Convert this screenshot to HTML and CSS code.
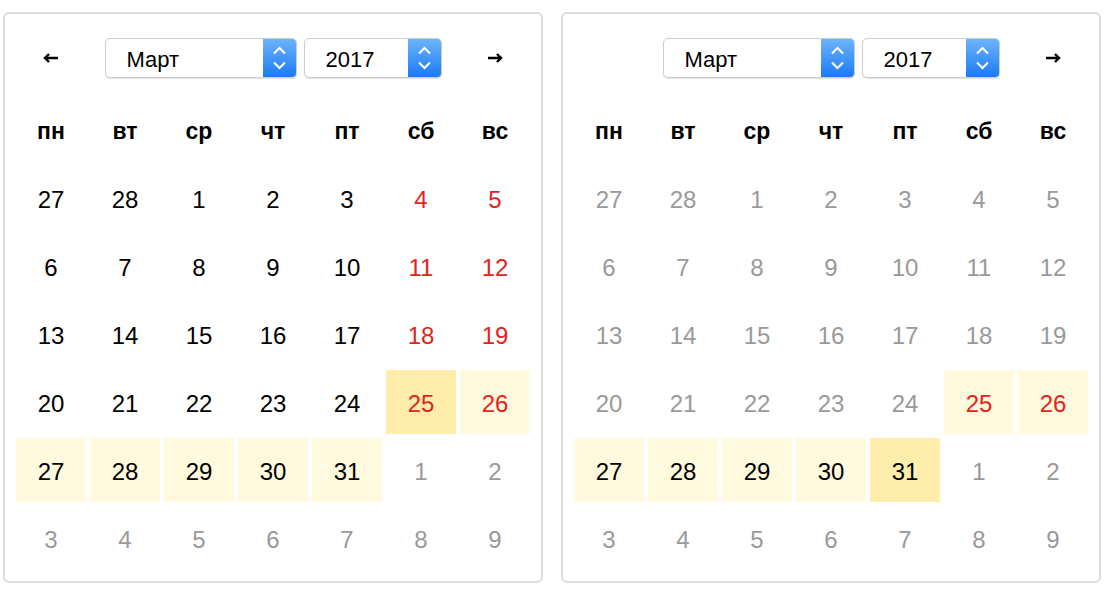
FILE: index.html
```html
<!DOCTYPE html>
<html>
<head>
  <meta charset="utf-8">
  <title>Календарь</title>
  <link rel="stylesheet" href="styles.css">
</head>
<body>

<div class="pickers">

  <!-- first month, start date chosen -->
  <div class="panel">
    <div class="nav">
      <span class="arrow">
        <svg width="16" height="10" viewBox="0 0 16 10"><path d="M15 5H3M6 1L2 5L6 9" fill="none" stroke="#000" stroke-width="2.4"/></svg>
      </span>
      <div class="selects">
        <div class="select month">
          <span class="label">Март</span>
          <span class="stepper"><svg width="33" height="38" viewBox="0 0 33 38"><path d="M11 14.5L16.5 9L22 14.5M11 23.5L16.5 29L22 23.5" fill="none" stroke="#fff" stroke-width="2"/></svg></span>
        </div>
        <div class="select year">
          <span class="label">2017</span>
          <span class="stepper"><svg width="33" height="38" viewBox="0 0 33 38"><path d="M11 14.5L16.5 9L22 14.5M11 23.5L16.5 29L22 23.5" fill="none" stroke="#fff" stroke-width="2"/></svg></span>
        </div>
      </div>
      <span class="arrow">
        <svg width="16" height="10" viewBox="0 0 16 10"><path d="M1 5H13M10 1L14 5L10 9" fill="none" stroke="#000" stroke-width="2.4"/></svg>
      </span>
    </div>

    <div class="grid">
      <div class="wd">пн</div><div class="wd">вт</div><div class="wd">ср</div><div class="wd">чт</div><div class="wd">пт</div><div class="wd">сб</div><div class="wd">вс</div>

      <div class="day">27</div><div class="day">28</div><div class="day">1</div><div class="day">2</div><div class="day">3</div><div class="day red">4</div><div class="day red">5</div>
      <div class="day">6</div><div class="day">7</div><div class="day">8</div><div class="day">9</div><div class="day">10</div><div class="day red">11</div><div class="day red">12</div>
      <div class="day">13</div><div class="day">14</div><div class="day">15</div><div class="day">16</div><div class="day">17</div><div class="day red">18</div><div class="day red">19</div>
      <div class="day">20</div><div class="day">21</div><div class="day">22</div><div class="day">23</div><div class="day">24</div><div class="day red picked">25</div><div class="day red range">26</div>
      <div class="day range">27</div><div class="day range">28</div><div class="day range">29</div><div class="day range">30</div><div class="day range">31</div><div class="day muted">1</div><div class="day muted">2</div>
      <div class="day muted">3</div><div class="day muted">4</div><div class="day muted">5</div><div class="day muted">6</div><div class="day muted">7</div><div class="day muted">8</div><div class="day muted">9</div>
    </div>
  </div>

  <!-- second month, end date chosen -->
  <div class="panel">
    <div class="nav">
      <span class="arrow hidden"></span>
      <div class="selects">
        <div class="select month">
          <span class="label">Март</span>
          <span class="stepper"><svg width="33" height="38" viewBox="0 0 33 38"><path d="M11 14.5L16.5 9L22 14.5M11 23.5L16.5 29L22 23.5" fill="none" stroke="#fff" stroke-width="2"/></svg></span>
        </div>
        <div class="select year">
          <span class="label">2017</span>
          <span class="stepper"><svg width="33" height="38" viewBox="0 0 33 38"><path d="M11 14.5L16.5 9L22 14.5M11 23.5L16.5 29L22 23.5" fill="none" stroke="#fff" stroke-width="2"/></svg></span>
        </div>
      </div>
      <span class="arrow">
        <svg width="16" height="10" viewBox="0 0 16 10"><path d="M1 5H13M10 1L14 5L10 9" fill="none" stroke="#000" stroke-width="2.4"/></svg>
      </span>
    </div>

    <div class="grid">
      <div class="wd">пн</div><div class="wd">вт</div><div class="wd">ср</div><div class="wd">чт</div><div class="wd">пт</div><div class="wd">сб</div><div class="wd">вс</div>

      <div class="day muted">27</div><div class="day muted">28</div><div class="day muted">1</div><div class="day muted">2</div><div class="day muted">3</div><div class="day muted">4</div><div class="day muted">5</div>
      <div class="day muted">6</div><div class="day muted">7</div><div class="day muted">8</div><div class="day muted">9</div><div class="day muted">10</div><div class="day muted">11</div><div class="day muted">12</div>
      <div class="day muted">13</div><div class="day muted">14</div><div class="day muted">15</div><div class="day muted">16</div><div class="day muted">17</div><div class="day muted">18</div><div class="day muted">19</div>
      <div class="day muted">20</div><div class="day muted">21</div><div class="day muted">22</div><div class="day muted">23</div><div class="day muted">24</div><div class="day red range">25</div><div class="day red range">26</div>
      <div class="day range">27</div><div class="day range">28</div><div class="day range">29</div><div class="day range">30</div><div class="day picked">31</div><div class="day muted">1</div><div class="day muted">2</div>
      <div class="day muted">3</div><div class="day muted">4</div><div class="day muted">5</div><div class="day muted">6</div><div class="day muted">7</div><div class="day muted">8</div><div class="day muted">9</div>
    </div>
  </div>

</div>

</body>
</html>
```

FILE: styles.css
```css
body {
  margin: 0;
  padding: 12px 0 0 3px;
  background: #fff;
  font-family: "Liberation Sans", Arial, sans-serif;
  color: #000;
}

.pickers {
  display: flex;
  gap: 18px;
}

.panel {
  width: 514px;
  padding: 24px 11px 11px 11px;
  border: 2px solid #dcdcdc;
  border-radius: 6px;
}

/* top bar with arrows and selects */
.nav {
  display: flex;
  align-items: center;
  height: 40px;
  margin-bottom: 20px;
}

.arrow {
  width: 70px;
  display: flex;
  justify-content: center;
  align-items: center;
}

.arrow.hidden {
  visibility: hidden;
}

.selects {
  flex: 1;
  display: flex;
  justify-content: center;
  gap: 7px;
}

.select {
  display: flex;
  height: 38px;
  border: 1px solid #cdcdcd;
  border-radius: 5px;
  background: #fff;
  box-shadow: 0 1px 1px rgba(0, 0, 0, 0.12);
  overflow: hidden;
}

.select.month {
  width: 190px;
}

.select.year {
  width: 136px;
}

.label {
  flex: 1;
  padding: 2px 0 0 21px;
  font-size: 22px;
  line-height: 38px;
}

.stepper {
  width: 33px;
  background: linear-gradient(#6db4fb, #1a7bf5);
  display: flex;
}

/* days */
.grid {
  display: grid;
  grid-template-columns: repeat(7, 70px);
  grid-auto-rows: 64px;
  gap: 4px;
}

.wd,
.day {
  display: flex;
  align-items: center;
  justify-content: center;
  padding-top: 3px;
  font-size: 24px;
}

.wd {
  padding-top: 2px;
  font-weight: bold;
  font-size: 23px;
}

.day.red {
  color: #e3231b;
}

.day.muted {
  color: #999;
}

.day.range {
  background: #fff9de;
}

.day.picked {
  background: #ffeeab;
}
```
